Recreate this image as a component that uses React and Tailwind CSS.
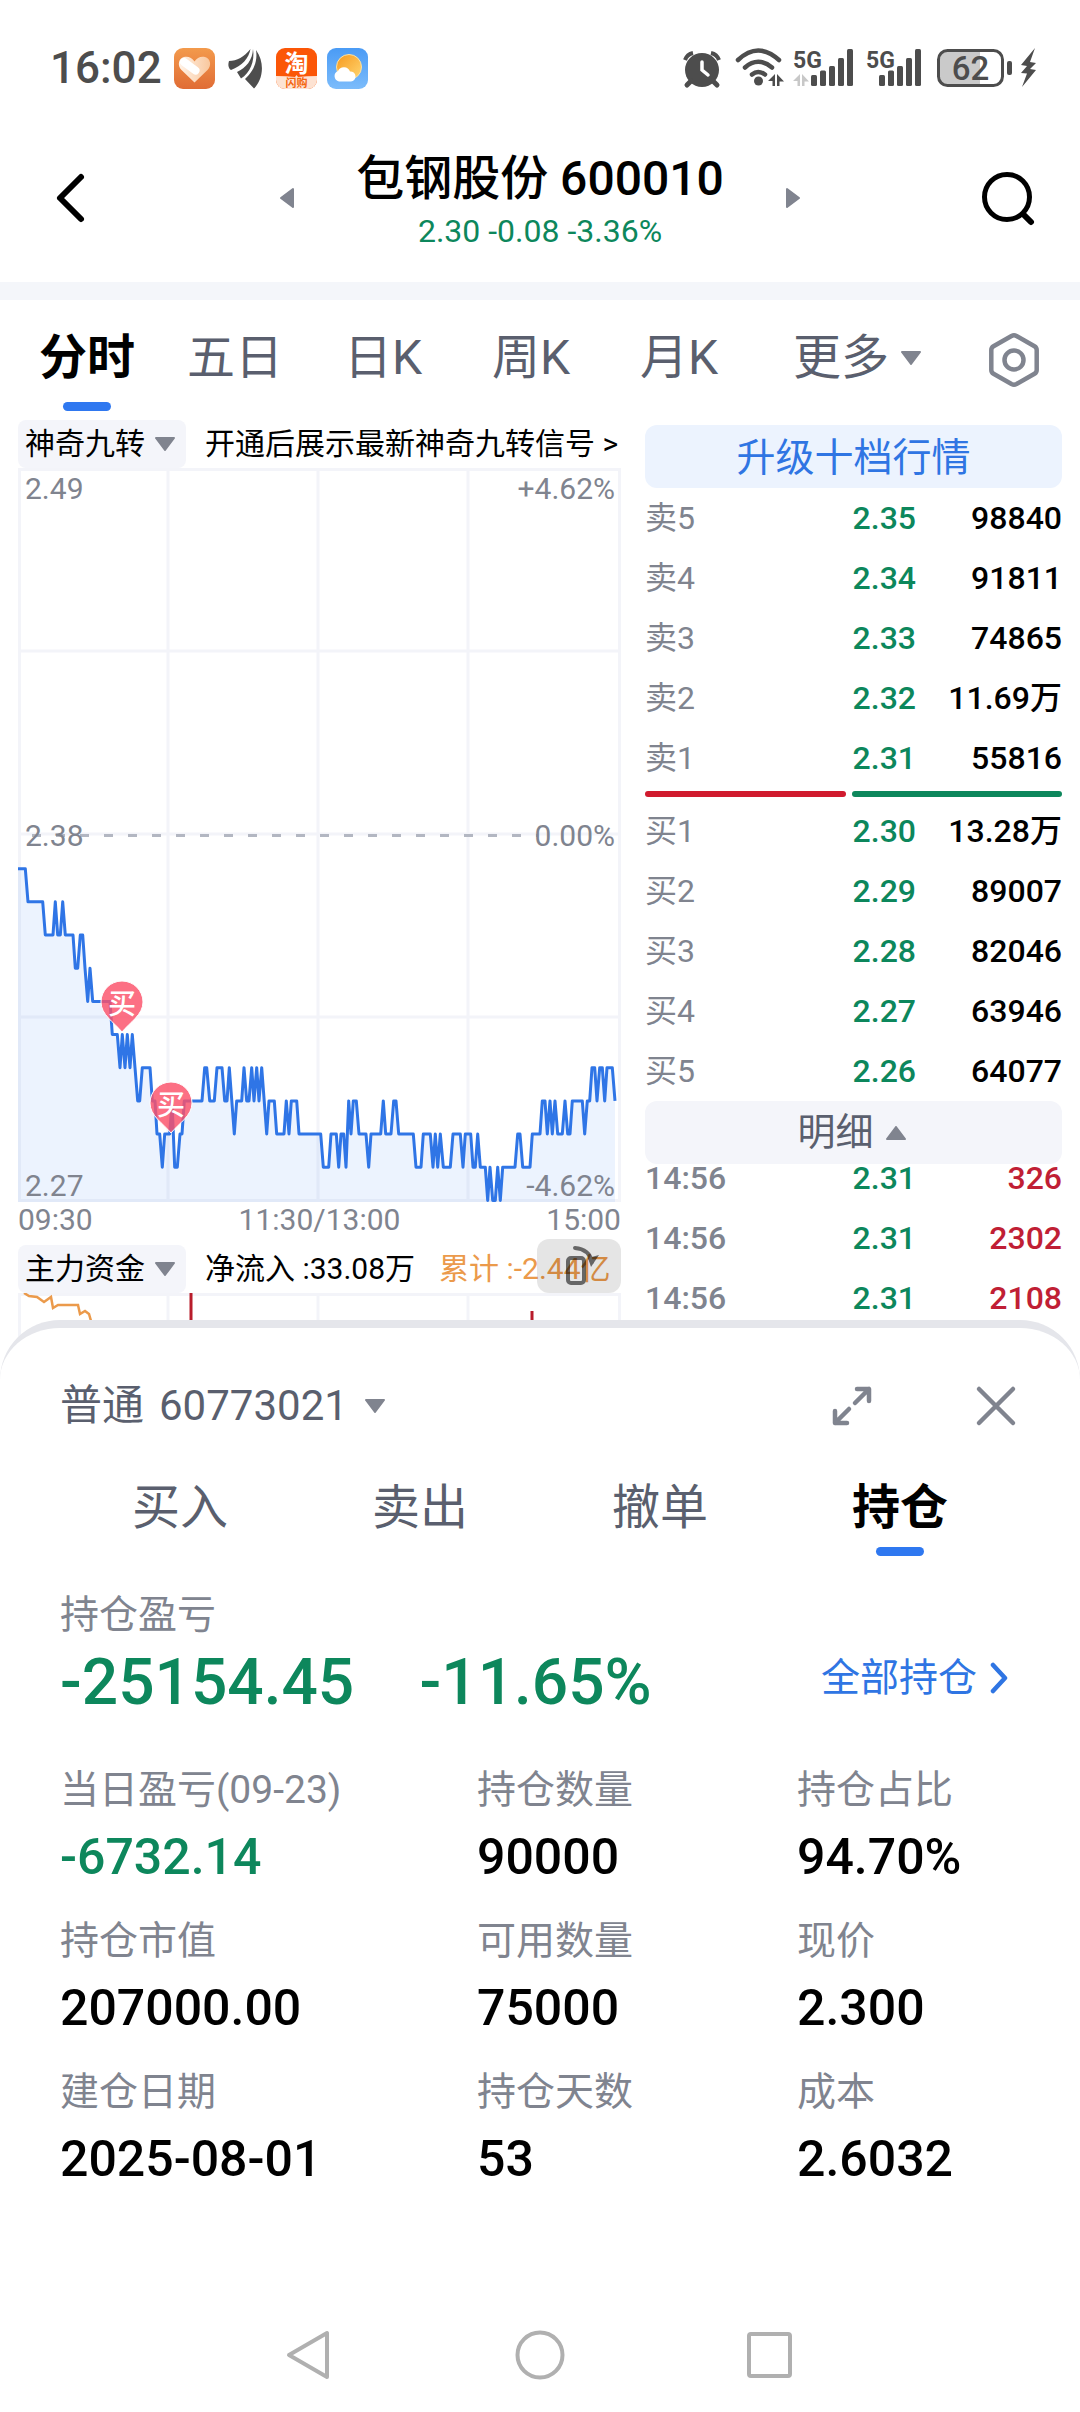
import React from "react";

const FONT = "font-[Roboto,'Noto_Sans_CJK_SC',sans-serif]";

/* Intraday prices: [x, ticks below the previous close], x in thirds of a unit. */
const PRICES = [
  [54, 1], [76, 1], [84, 2], [128, 2], [136, 3], [159, 3], [166, 2], [173, 3], [181, 3], [188, 2], [196, 3], [219, 3],
  [226, 4], [233, 4], [241, 3], [248, 3], [255, 4], [263, 5], [270, 4], [278, 5], [330, 5], [337, 6], [352, 6], [360, 7],
  [367, 6], [375, 7], [382, 6], [390, 7], [397, 6], [405, 7], [413, 8], [419, 8], [427, 7], [450, 7], [457, 8], [465, 8],
  [471, 9], [479, 9], [487, 10], [494, 9], [509, 9], [516, 8], [524, 10], [532, 10], [540, 9], [546, 9], [553, 8], [606, 8],
  [614, 7], [620, 7], [629, 8], [643, 8], [651, 7], [666, 7], [674, 8], [681, 8], [688, 7], [703, 9], [710, 8], [725, 8],
  [732, 7], [740, 8], [747, 8], [755, 7], [762, 8], [770, 7], [777, 8], [785, 7], [800, 9], [807, 8], [823, 8], [830, 9],
  [852, 9], [859, 8], [867, 9], [874, 8], [890, 8], [897, 9], [962, 9], [970, 10], [986, 10], [993, 9], [1009, 9], [1016, 10],
  [1023, 9], [1031, 9], [1038, 10], [1046, 8], [1053, 9], [1060, 8], [1069, 8], [1077, 9], [1098, 9], [1106, 10], [1113, 9],
  [1142, 9], [1150, 8], [1157, 9], [1173, 9], [1181, 8], [1188, 8], [1196, 9], [1240, 9], [1248, 10], [1263, 10], [1270, 9],
  [1291, 9], [1299, 10], [1306, 9], [1313, 10], [1321, 9], [1330, 10], [1351, 10], [1359, 9], [1381, 9], [1389, 10], [1396, 9],
  [1412, 9], [1419, 10], [1426, 10], [1433, 9], [1441, 10], [1456, 10], [1463, 11], [1470, 10], [1478, 11], [1486, 11],
  [1493, 10], [1501, 11], [1508, 10], [1545, 10], [1553, 9], [1560, 9], [1568, 10], [1590, 10], [1597, 9], [1620, 9],
  [1627, 8], [1635, 8], [1642, 9], [1650, 8], [1657, 9], [1665, 8], [1673, 9], [1687, 9], [1695, 8], [1703, 9], [1710, 9],
  [1717, 8], [1747, 8], [1754, 9], [1762, 8], [1769, 8], [1776, 7], [1784, 7], [1791, 8], [1799, 7], [1807, 7], [1814, 8],
  [1821, 7], [1837, 7], [1845, 8],
];
const LINE = PRICES.map(([x, t]) => `${(x / 3 - 18).toFixed(1)},${(367.5 + 33.17 * t).toFixed(1)}`).join(" ");

const SELLS = [
  ["卖5", "2.35", "98840"],
  ["卖4", "2.34", "91811"],
  ["卖3", "2.33", "74865"],
  ["卖2", "2.32", "11.69万"],
  ["卖1", "2.31", "55816"],
];
const BUYS = [
  ["买1", "2.30", "13.28万"],
  ["买2", "2.29", "89007"],
  ["买3", "2.28", "82046"],
  ["买4", "2.27", "63946"],
  ["买5", "2.26", "64077"],
];
const TICKS = [
  ["14:56", "2.31", "326"],
  ["14:56", "2.31", "2302"],
  ["14:56", "2.31", "2108"],
];
const HOLDING = [
  ["当日盈亏(09-23)", "-6732.14", true],
  ["持仓数量", "90000"],
  ["持仓占比", "94.70%"],
  ["持仓市值", "207000.00"],
  ["可用数量", "75000"],
  ["现价", "2.300"],
  ["建仓日期", "2025-08-01"],
  ["持仓天数", "53"],
  ["成本", "2.6032"],
];

function Triangle({ className = "" }) {
  return (
    <svg viewBox="0 0 20 14" className={`h-[14px] w-5 shrink-0 ${className}`} aria-hidden="true">
      <path d="M1 1h18L10 13z" fill="#80848f" stroke="#80848f" strokeWidth="2" strokeLinejoin="round" />
    </svg>
  );
}

function Signal({ label, faded }) {
  return (
    <svg viewBox="0 0 62 41" className="h-[41px] w-[62px] overflow-visible" aria-label="5G">
      <text x="0" y="20" fontSize="23" fontWeight="700" fill="#4d4d4d">{label}</text>
      {faded && <path d="M7 26v12H4.5v-5H0zM9 26v12h2.5v-4.5H16z" fill="#c8c8c8" />}
      <g fill="#4d4d4d">
        <rect x={faded ? 18 : 13} y="27" width="6" height="11" rx="1.5" />
        <rect x={faded ? 27 : 22} y="22.5" width="6" height="15.5" rx="1.5" />
        <rect x={faded ? 36 : 31} y="18" width="6" height="20" rx="1.5" />
        <rect x={faded ? 45 : 40} y="10" width="6" height="28" rx="1.5" />
        <rect x={faded ? 54 : 49} y="1" width="6" height="37" rx="1.5" />
      </g>
    </svg>
  );
}

function StatusBar() {
  return (
    <div className="flex h-[132px] items-start justify-between pt-12 pr-[43px] pl-[50px] text-[#4d4d4d]">
      <div className="flex items-center">
        <span className="mr-3 text-[44px] leading-[41px] font-medium">16:02</span>
        <svg viewBox="0 0 41 41" className="mr-[13px] size-[41px]" aria-hidden="true">
          <defs>
            <linearGradient id="heartBg" x1="0" y1="0" x2="0" y2="1">
              <stop offset="0" stopColor="#f39a4c" />
              <stop offset="1" stopColor="#e06c35" />
            </linearGradient>
            <linearGradient id="heartFill" x1="0" y1="0" x2="1" y2="0">
              <stop offset="0" stopColor="#fff3e8" />
              <stop offset="1" stopColor="#f9c79d" />
            </linearGradient>
          </defs>
          <rect width="41" height="41" rx="9" fill="url(#heartBg)" />
          <path d="M20.5 34.5 7.5 22C3 17.5 4.5 10.5 10 9c4-1 8 .5 10.5 4.5C23 9.500 27 8 31 9c5.500 1.500 7 8.500 2.500 13z" fill="url(#heartFill)" />
          <path d="m10 14 11.500 8.500" stroke="#fff" strokeWidth="8" strokeLinecap="round" />
        </svg>
        <svg viewBox="0 0 35 41" className="mr-[13px] h-[41px] w-[35px]" aria-hidden="true">
          <g fill="#4d4d4d">
            <path d="M1 13C9 13 16 9 22.500 1 21 10 14 18 3 22 0 20 0 16 1 13z" />
            <path d="M25 1C24.500 12 18 20 9 24l4 6.500C22 25 27 13 25 1z" />
            <path d="M28 2c2 12-3 22-11 29l9 9.500C34 33 38 16 28 2z" />
          </g>
        </svg>
        <svg viewBox="0 0 41 41" className="mr-[10px] size-[41px] overflow-visible" aria-label="淘宝闪购">
          <clipPath id="tao"><rect width="41" height="41" rx="9" /></clipPath>
          <g clipPath="url(#tao)">
            <rect width="41" height="41" fill="#fb5607" />
            <path d="M0 28q10 0 19 1l1.500-2 1.500 2q9-1 19-1v13H0z" fill="#fde3d3" />
          </g>
          <text x="20.5" y="24" textAnchor="middle" fontSize="24" fontWeight="700" fill="#fff">淘</text>
          <text x="20.5" y="39" textAnchor="middle" fontSize="11" fontWeight="700" fill="#f4660f">闪购</text>
        </svg>
        <svg viewBox="0 0 41 41" className="size-[41px]" aria-hidden="true">
          <defs>
            <linearGradient id="sky" x1="0" y1="0" x2="0" y2="1">
              <stop offset="0" stopColor="#4a9bf5" />
              <stop offset="1" stopColor="#7cbcfb" />
            </linearGradient>
            <linearGradient id="sun" x1="0" y1="0" x2="1" y2="1">
              <stop offset="0" stopColor="#f7981d" />
              <stop offset="1" stopColor="#ffd873" />
            </linearGradient>
          </defs>
          <rect width="41" height="41" rx="9" fill="url(#sky)" />
          <circle cx="22" cy="19" r="12.5" fill="url(#sun)" stroke="#fbe3a6" />
          <path d="M12 33.500a5.500 5.500 0 0 1-1-10.500 6.500 6.500 0 0 1 12 .5 5 5 0 0 1 1 10z" fill="#fff" />
        </svg>
      </div>
      <div className="flex items-center">
        <svg viewBox="0 0 38 41" className="mr-[14px] h-[41px] w-[38px]" aria-label="闹钟">
          <circle cx="19" cy="22" r="17" fill="#4d4d4d" />
          <path d="M2 12a11 11 0 0 1 8-7M36 12a11 11 0 0 0-8-7" stroke="#4d4d4d" strokeWidth="4" fill="none" />
          <path d="m8 33-4 4M30 33l4 4" stroke="#4d4d4d" strokeWidth="5" strokeLinecap="round" />
          <path d="M19 14v8l6 5" stroke="#fff" strokeWidth="3.5" fill="none" strokeLinecap="round" />
        </svg>
        <svg viewBox="0 0 50 41" className="mr-2 h-[41px] w-[50px]" aria-label="Wi-Fi">
          <g fill="none" stroke="#4d4d4d" strokeWidth="4.5" strokeLinecap="round">
            <path d="M3 12Q23-7 44 12" />
            <path d="M10 19.500Q23 8 37 19.500" />
            <path d="M17 26.500Q23 21.500 30 26.500" />
          </g>
          <circle cx="23.5" cy="33" r="4.5" fill="#4d4d4d" />
          <path d="M40 26v12h-2.500v-5H33zM42 26v12h2.500v-4.500H49z" fill="#4d4d4d" />
        </svg>
        <div className="flex gap-[11px]">
          <Signal label="5G" faded />
          <Signal label="5G" />
        </div>
        <svg viewBox="0 0 76 41" className="mr-2 ml-[9px] h-[41px] w-[76px] overflow-visible" aria-label="62%">
          <path d="M11 3h32v34H11a8 8 0 0 1-8-8V11a8 8 0 0 1 8-8z" fill="#cacaca" />
          <rect x="1.5" y="2.5" width="64" height="35" rx="9" fill="none" stroke="#4d4d4d" strokeWidth="3" />
          <rect x="70" y="13" width="5" height="14" rx="2" fill="#4d4d4d" />
          <text x="33.5" y="32" textAnchor="middle" fontSize="33" fontWeight="500" fill="#4d4d4d">62</text>
        </svg>
        <svg viewBox="0 0 16 41" className="h-[41px] w-4" aria-label="充电中">
          <path d="M14 0 0 17l6 1-6 7 6 .5L1 39l14-17-6-1 6-6-6-1z" fill="#4d4d4d" />
        </svg>
      </div>
    </div>
  );
}

function Header() {
  return (
    <header className="grid h-[150px] grid-cols-[1fr_auto_1fr] items-center gap-[62px] pb-[18px]">
      <div className="flex items-center justify-between pl-[54px]">
        <button aria-label="返回">
          <svg viewBox="0 0 32 54" className="h-[54px] w-8"><path d="M27 6 6 27l21 21" fill="none" stroke="#000" strokeWidth="6" strokeLinecap="round" strokeLinejoin="round" /></svg>
        </button>
        <button aria-label="上一只">
          <svg viewBox="0 0 14 22" className="h-[22px] w-[14px]"><path d="M13 2v18L1 11z" fill="#80848f" stroke="#80848f" strokeWidth="2" strokeLinejoin="round" /></svg>
        </button>
      </div>
      <div className="pt-1.5 text-center">
        <h1 className="text-[48px] leading-[60px] font-medium text-black">包钢股份 600010</h1>
        <p className="text-[32px] leading-[44px] text-[#0d875c]">2.30 -0.08 -3.36%</p>
      </div>
      <div className="flex items-center justify-between pr-[44px]">
        <button aria-label="下一只">
          <svg viewBox="0 0 14 22" className="h-[22px] w-[14px]"><path d="M1 2v18l12-9z" fill="#80848f" stroke="#80848f" strokeWidth="2" strokeLinejoin="round" /></svg>
        </button>
        <button aria-label="搜索">
          <svg viewBox="0 0 56 56" className="size-14" fill="none" stroke="#000" strokeWidth="5" strokeLinecap="round">
            <circle cx="27" cy="27" r="22.5" />
            <path d="m44 45 7 7" strokeWidth="6" />
          </svg>
        </button>
      </div>
    </header>
  );
}

function Chip({ children }) {
  return (
    <button className="flex h-12 w-[168px] shrink-0 items-center justify-between rounded-lg bg-[#f4f5fa] pr-[11px] pl-[7px] text-[30px] leading-10 text-black">
      {children}
      <Triangle />
    </button>
  );
}

function Grid({ height, rows }) {
  return (
    <g fill="none" stroke="#f3f4f9" strokeWidth="3">
      {[1.5, 150, 300, 450, 601.5].map((x) => <path key={x} d={`M${x} 0V${height}`} />)}
      {rows.map((y) => <path key={y} d={`M0 ${y}H603`} />)}
    </g>
  );
}

function BuyPin({ x, y }) {
  return (
    <g>
      <path d={`M${x} ${y}C${x - 8} ${y - 10} ${x - 21} ${y - 17} ${x - 21} ${y - 30}a21 21 0 0 1 42 0C${x + 21} ${y - 17} ${x + 8} ${y - 10} ${x} ${y}z`} fill="#fb5069" fillOpacity="0.82" stroke="#fff" strokeWidth="1" />
      <text x={x} y={y - 18} textAnchor="middle" fontSize="28" fontWeight="500" fill="#fff">买</text>
    </g>
  );
}

function PriceChart() {
  return (
    <svg viewBox="0 0 603 734" className="block w-full overflow-visible" role="img" aria-label="分时走势">
      <Grid height={734} rows={[1.5, 183, 366, 549, 732.5]} />
      <polygon points={`0,734 ${LINE} 597,734`} fill="#2f78f0" fillOpacity="0.09" />
      <path d="M14 367.5H520" stroke="#b3b7c2" strokeWidth="3" strokeDasharray="9 15" />
      <polyline points={LINE} fill="none" stroke="#2f75e6" strokeWidth="3" strokeLinejoin="round" />
      <g fontSize="30" fill="#80848f">
        <text x="7" y="31">2.49</text>
        <text x="597" y="31" textAnchor="end">+4.62%</text>
        <text x="7" y="378">2.38</text>
        <text x="597" y="378" textAnchor="end">0.00%</text>
        <text x="7" y="728">2.27</text>
        <text x="597" y="728" textAnchor="end">-4.62%</text>
      </g>
      <BuyPin x={104} y={564} />
      <BuyPin x={153} y={665} />
    </svg>
  );
}

function FundChart() {
  return (
    <svg viewBox="0 0 603 81" className="block w-full" role="img" aria-label="主力资金走势">
      <Grid height={81} rows={[1.5]} />
      <path d="M6 0 11 3 19 4 26 9 33 4 35 15 40 12 60 12 62 21 67 18 71 21 73 28V40" fill="none" stroke="#eb9a4b" strokeWidth="2.5" />
      <path d="M173 0v60M514 18v40M487 30v30" stroke="#b81c2b" strokeWidth="3" />
    </svg>
  );
}

function Quotes({ rows, tick, label }) {
  return (
    <table className="w-full table-fixed text-[32px] leading-10 font-medium" aria-label={label}>
      <colgroup>
        <col className="w-[36%]" />
        <col className="w-[29%]" />
        <col className="w-[35%]" />
      </colgroup>
      <tbody>
        {rows.map(([name, price, volume], i) => (
          <tr key={i} className="h-[60px]">
            <th scope="row" className={tick ? "text-left font-medium text-[#80848f]" : "text-left font-normal text-[#80848f]"}>{name}</th>
            <td className="text-right text-[#0d875c]">{price}</td>
            <td className={tick ? "text-right text-[#c01f35]" : "text-right text-black"}>{volume}</td>
          </tr>
        ))}
      </tbody>
    </table>
  );
}

function PeriodTabs() {
  return (
    <nav className="grid grid-cols-[148fr_148fr_148fr_148fr_148fr_208fr_106fr] items-start px-[13px] pt-[30px] text-[48px] leading-[56px] text-[#5a5f6e]">
      <button className="flex flex-col items-center font-bold text-black">
        分时
        <span className="mt-4 h-[9px] w-12 rounded-full bg-[#2f78f0]" />
      </button>
      <button>五日</button>
      <button>日K</button>
      <button>周K</button>
      <button>月K</button>
      <button className="flex items-center justify-center gap-3">更多<Triangle /></button>
      <button aria-label="设置" className="flex justify-center pt-0.5">
        <svg viewBox="0 0 52 56" className="h-14 w-[52px]" fill="none" stroke="#80848f" strokeWidth="4.5" strokeLinejoin="round">
          <path d="M23.500 4q2.500-1.300 5 0l18 10.200q2.200 1.300 2.200 3.800v20q0 2.500-2.200 3.800L28.500 52q-2.500 1.300-5 0l-18-10.200Q3.300 40.500 3.300 38V18q0-2.500 2.200-3.800z" />
          <circle cx="26" cy="28" r="9.5" />
        </svg>
      </button>
    </nav>
  );
}

function Market() {
  return (
    <section className="-mt-0.5 grid grid-cols-[603fr_417fr] gap-6 px-[18px] pt-0.5">
      <div className="pt-[9px]">
        <div className="flex items-center gap-[19px]">
          <Chip>神奇九转</Chip>
          <a href="#signal" className="text-[30px] leading-10 whitespace-nowrap text-black">开通后展示最新神奇九转信号 &gt;</a>
        </div>
        <PriceChart />
        <div className="flex h-[43px] justify-between text-[30px] leading-9 text-[#80848f]">
          <span>09:30</span>
          <span>11:30/13:00</span>
          <span>15:00</span>
        </div>
        <div className="relative flex items-center text-[30px] leading-10 whitespace-nowrap">
          <Chip>主力资金</Chip>
          <span className="ml-[19px] text-black">净流入 :33.08万</span>
          <span className="ml-6 text-[#eb9a4b]">累计 :-2.44亿</span>
          <button aria-label="横屏" className="absolute right-0 bottom-0 rounded-xl bg-black/10">
            <svg viewBox="0 0 84 54" className="h-[54px] w-[84px]" fill="none" stroke="#000" strokeWidth="4" opacity="0.55">
              <rect x="31" y="19" width="16" height="25" rx="3" />
              <path d="M38 9q14 1 17 14" strokeLinecap="round" />
              <path d="m51 19 11-3-8 12z" fill="#000" stroke="none" />
            </svg>
          </button>
        </div>
        <FundChart />
      </div>
      <div className="pt-[14px]">
        <button className="h-[63px] w-full rounded-xl bg-[#ecf3fe] pt-[3px] text-[39px] leading-[60px] text-[#2f75e3]">升级十档行情</button>
        <Quotes rows={SELLS} label="卖盘" />
        <div className="mt-[3px] mb-1 flex h-[6px] gap-[6px]">
          <div className="flex-[201] rounded-full bg-[#d01a2e]" />
          <div className="flex-[210] rounded-full bg-[#0d875c]" />
        </div>
        <Quotes rows={BUYS} label="买盘" />
        <button className="flex h-[63px] w-full items-center justify-center gap-3 rounded-xl bg-[#f4f5fa] pr-1 text-[38px] leading-[63px] text-[#5a5f6e]">
          明细
          <Triangle className="rotate-180" />
        </button>
        <div className="overflow-hidden">
          <div className="-mt-4">
            <Quotes rows={TICKS} tick label="成交明细" />
          </div>
        </div>
      </div>
    </section>
  );
}

function TradeSheet() {
  return (
    <section className="relative -mt-[54px] rounded-t-[60px] border-t-8 border-[#e5e6eb] bg-white px-[60px] pt-[50px]">
      <div className="flex items-center justify-between">
        <button className="flex items-center gap-[17px] text-[42px] leading-[56px] text-[#5a5f6e]">
          <span className="flex gap-[15px]">
            <span>普通</span>
            <span>60773021</span>
          </span>
          <Triangle />
        </button>
        <div className="flex gap-[102px] pr-[3px]">
          <button aria-label="展开">
            <svg viewBox="0 0 42 42" className="size-[42px]" fill="none" stroke="#80848f" strokeWidth="4.5" strokeLinecap="round" strokeLinejoin="round">
              <path d="M26 4h12v12M38 4 24 18M4 26v12h12M4 38l14-14" />
            </svg>
          </button>
          <button aria-label="关闭">
            <svg viewBox="0 0 42 42" className="size-[42px]" fill="none" stroke="#80848f" strokeWidth="4.5" strokeLinecap="round"><path d="m4 4 34 34M38 4 4 38" /></svg>
          </button>
        </div>
      </div>
      <nav className="mt-[46px] grid grid-cols-4 items-start text-[48px] leading-[56px] text-[#5a5f6e]">
        <button>买入</button>
        <button>卖出</button>
        <button>撤单</button>
        <button className="flex flex-col items-center font-bold text-black">
          持仓
          <span className="mt-[11px] h-[9px] w-12 rounded-full bg-[#2f78f0]" />
        </button>
      </nav>
      <p className="mt-[35px] text-[39px] leading-[48px] text-[#80848f]">持仓盈亏</p>
      <div className="mt-2 grid grid-cols-[360fr_402fr_auto] items-start pr-[11px] text-[64px] leading-[72px] font-medium text-[#0d875c]">
        <span>-25154.45</span>
        <span>-11.65%</span>
        <a href="#all" className="flex items-center gap-3 text-[39px] leading-[62px] font-normal text-[#2f75e3]">
          全部持仓
          <svg viewBox="0 0 20 32" className="h-8 w-5" aria-hidden="true"><path d="m4 3 12 13L4 29" fill="none" stroke="#2f75e3" strokeWidth="4.5" strokeLinecap="round" strokeLinejoin="round" /></svg>
        </a>
      </div>
      <dl className="mt-[47px] grid grid-cols-[417fr_320fr_223fr] gap-y-[30px]">
        {HOLDING.map(([name, value, loss]) => (
          <div key={name}>
            <dt className="text-[39px] leading-[48px] text-[#80848f]">{name}</dt>
            <dd className={loss ? "mt-[13px] text-[50px] leading-[60px] font-medium text-[#0d875c]" : "mt-[13px] text-[50px] leading-[60px] font-medium text-black"}>{value}</dd>
          </div>
        ))}
      </dl>
    </section>
  );
}

function SystemNav() {
  return (
    <nav className="flex items-center justify-center gap-[180px] pt-[141px] pb-8" aria-label="系统导航">
      <button aria-label="返回">
        <svg viewBox="0 0 50 50" className="size-[50px]"><path d="M42 3v44L4 25z" fill="none" stroke="#b0b0b0" strokeWidth="4" strokeLinejoin="round" /></svg>
      </button>
      <button aria-label="主页">
        <svg viewBox="0 0 50 50" className="size-[50px]"><circle cx="25" cy="25" r="22.5" fill="none" stroke="#b0b0b0" strokeWidth="4" /></svg>
      </button>
      <button aria-label="最近任务">
        <svg viewBox="0 0 50 50" className="size-[50px]"><rect x="4" y="4" width="41" height="42" rx="2" fill="none" stroke="#b0b0b0" strokeWidth="4" /></svg>
      </button>
    </nav>
  );
}

export default function App() {
  return (
    <div className={`${FONT} w-full overflow-hidden bg-white`}>
      <StatusBar />
      <Header />
      <div className="h-[18px] bg-[#f4f6fa]" />
      <PeriodTabs />
      <Market />
      <TradeSheet />
      <SystemNav />
    </div>
  );
}
